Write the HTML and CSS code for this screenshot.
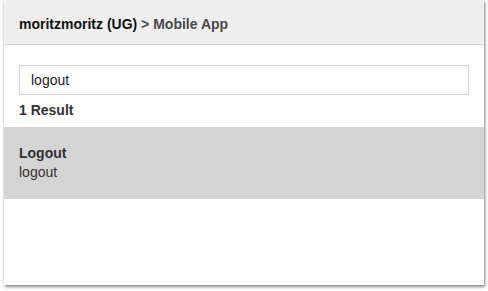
FILE: index.html
```
<!DOCTYPE html>
<html>
<head>
<meta charset="utf-8">
<link rel="stylesheet" href="styles.css">
</head>
<body>
<div class="panel">
  <div class="header"><span class="org">moritzmoritz (UG)</span> <span class="crumb">&gt; Mobile App</span></div>
  <div class="search">
    <div class="input">logout</div>
    <div class="count">1 Result</div>
  </div>
  <div class="row">
    <div class="title">Logout</div>
    <div class="sub">logout</div>
  </div>
</div>
</body>
</html>
```
FILE: styles.css
```
html, body {
  margin: 0;
  padding: 0;
  background: #fff;
}
body {
  padding: 0 4px;
  height: 291px;
  box-sizing: border-box;
  font-family: "Liberation Sans", Arial, sans-serif;
  font-size: 14px;
  color: #333;
}
.panel {
  width: 480px;
  height: 285px;
  background: #fff;
  box-shadow: 1px 2px 3px rgba(0,0,0,0.45), 0 0 1px rgba(0,0,0,0.3);
  display: flex;
  flex-direction: column;
}
.header {
  box-sizing: border-box;
  height: 45px;
  padding: 14px 15px 0;
  line-height: 20px;
  background: #efefef;
  border-bottom: 1px solid #d4d4d4;
  font-weight: bold;
}
.org { color: #111; }
.crumb { color: #4a4a4a; }
.search {
  padding: 20px 15px 0;
}
.input {
  height: 30px;
  box-sizing: border-box;
  border: 1px solid #d2d2d2;
  padding: 0 11px;
  line-height: 28px;
  color: #222;
  font-size: 14px;
}
.count {
  margin-top: 5px;
  line-height: 20px;
  font-weight: bold;
  color: #333;
}
.row {
  margin-top: 7px;
  background: #d4d4d4;
  padding: 17px 15px;
  line-height: 19px;
  color: #333;
}
.title { font-weight: bold; }
```
